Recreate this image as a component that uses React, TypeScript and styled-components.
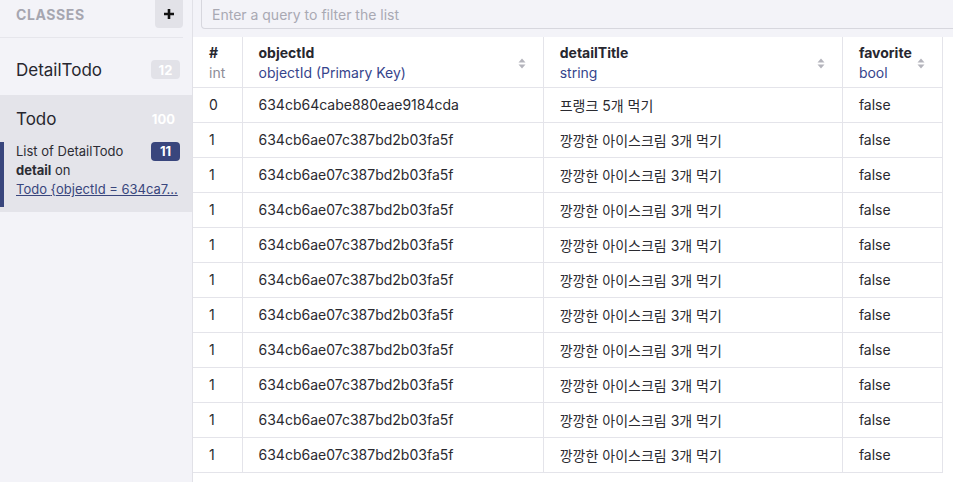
import React from "react";
import styled, { createGlobalStyle } from "styled-components";

const Global = createGlobalStyle`
  html, body { margin: 0; padding: 0; }
  body {
    font-family: Inter, "Noto Sans CJK KR", "Noto Sans", sans-serif;
    color: #27272f;
    background: #ffffff;
    overflow: hidden;
  }
  * { box-sizing: border-box; }
`;

const Root = styled.div`
  display: flex;
  width: 953px;
  height: 482px;
  overflow: hidden;
`;

const Sidebar = styled.aside`
  width: 193px;
  flex: none;
  background: #f3f3f8;
  border-right: 1px solid #e1e1e7;
  display: flex;
  flex-direction: column;
`;

const SideHeader = styled.div`
  height: 38px;
  margin-right: 9px;
  padding-left: 16px;
  display: flex;
  align-items: flex-start;
  justify-content: space-between;
  border-bottom: 1px solid #e6e6ec;
`;

const SideTitle = styled.span`
  margin-top: 6px;
  font-size: 14px;
  font-weight: 700;
  letter-spacing: 0.6px;
  color: #a6a6b0;
`;

const PlusButton = styled.button`
  width: 28px;
  height: 28px;
  border: none;
  border-radius: 0 0 4px 4px;
  background: #e2e2e8;
  display: flex;
  align-items: center;
  justify-content: center;
  padding: 0;
`;

const ClassItem = styled.div<{ $selected?: boolean }>`
  background: ${(p) => (p.$selected ? "#e4e4ea" : "transparent")};
  display: flex;
  flex-direction: column;
  padding-bottom: ${(p) => (p.$selected ? "5px" : "0")};
`;

const ClassRow = styled.div<{ $h: number; $top: number }>`
  height: ${(p) => p.$h}px;
  padding: ${(p) => p.$top}px 12px 0 16px;
  display: flex;
  align-items: center;
  justify-content: space-between;
`;

const ClassName = styled.span`
  font-size: 17px;
  color: #27272f;
`;

const Badge = styled.span<{ $bg: string }>`
  min-width: 29px;
  height: 19px;
  padding: 0 5px;
  border-radius: 4px;
  background: ${(p) => p.$bg};
  color: #ffffff;
  font-size: 13px;
  font-weight: 700;
  display: inline-flex;
  align-items: center;
  justify-content: center;
`;

const SubItem = styled.div`
  border-left: 4px solid #39467d;
  padding: 0 12px 8px 12px;
  display: flex;
  flex-direction: column;
  font-size: 13px;
  line-height: 19px;
  color: #2c2c34;
  white-space: nowrap;
`;

const SubTop = styled.div`
  display: flex;
  justify-content: space-between;
  align-items: center;
`;

const SubLink = styled.a`
  display: block;
  color: #39467d;
  text-decoration: underline;
  overflow: hidden;
  text-overflow: ellipsis;
`;

const Main = styled.main`
  flex: 1;
  display: flex;
  flex-direction: column;
  background: #f3f3f8;
  min-width: 0;
`;

const Toolbar = styled.div`
  height: 37px;
  padding-left: 8px;
  flex: none;
`;

const SearchInput = styled.input`
  width: 800px;
  height: 29px;
  border: 1px solid #d7d7de;
  border-top: none;
  border-radius: 0 0 0 4px;
  background: #f3f3f8;
  padding: 0 10px;
  font-family: Inter, sans-serif;
  font-size: 14px;
  color: #27272f;
  outline: none;
  &::placeholder { color: #a9a9b3; }
`;

const TableArea = styled.div`
  flex: 1;
  background: #ffffff;
`;

const Table = styled.table`
  border-collapse: collapse;
  table-layout: fixed;
  width: 750px;
  font-size: 14px;
`;

const HeadCell = styled.th<{ $w: number }>`
  width: ${(p) => p.$w}px;
  height: 50px;
  padding: 3px 17px 0 16px;
  border: 1px solid #e4e4ea;
  border-top: none;
  text-align: left;
  vertical-align: middle;
  &:first-child { border-left: none; }
`;

const HeadInner = styled.div`
  display: flex;
  align-items: center;
  justify-content: space-between;
`;

const HeadLabels = styled.div`
  display: flex;
  flex-direction: column;
  line-height: 20px;
`;

const HeadName = styled.span`
  font-weight: 700;
  color: #27272f;
`;

const HeadType = styled.span<{ $muted?: boolean }>`
  font-weight: 400;
  color: ${(p) => (p.$muted ? "#8d8d97" : "#36458c")};
`;

const Cell = styled.td`
  height: 35px;
  padding: 0 16px;
  border: 1px solid #e4e4ea;
  white-space: nowrap;
  overflow: hidden;
  color: #2a2a30;
  &:first-child { border-left: none; }
`;

const SortIcon = () => (
  <svg width="8" height="11" viewBox="0 0 8 11" style={{ flex: "none" }}>
    <path d="M4 0.5 L7.5 4.5 H0.5 Z" fill="#b4b4bc" />
    <path d="M4 10.5 L7.5 6.5 H0.5 Z" fill="#b4b4bc" />
  </svg>
);

const PlusIcon = () => (
  <svg width="12" height="12" viewBox="0 0 12 12">
    <path d="M6 1v10M1 6h10" stroke="#111" strokeWidth="2.6" />
  </svg>
);

type Row = { n: number; id: string; title: string; fav: string };

const rows: Row[] = [
  { n: 0, id: "634cb64cabe880eae9184cda", title: "프랭크 5개 먹기", fav: "false" },
  ...Array.from({ length: 10 }, () => ({
    n: 1,
    id: "634cb6ae07c387bd2b03fa5f",
    title: "깡깡한 아이스크림 3개 먹기",
    fav: "false",
  })),
];

const columns = [
  { w: 49, name: "#", type: "int", muted: true, sort: false },
  { w: 301, name: "objectId", type: "objectId (Primary Key)", muted: false, sort: true },
  { w: 299, name: "detailTitle", type: "string", muted: false, sort: true },
  { w: 100, name: "favorite", type: "bool", muted: false, sort: true },
];

export default function App() {
  return (
    <Root>
      <Global />
      <Sidebar>
        <SideHeader>
          <SideTitle>CLASSES</SideTitle>
          <PlusButton aria-label="add class">
            <PlusIcon />
          </PlusButton>
        </SideHeader>
        <ClassItem>
          <ClassRow $h={57} $top={6}>
            <ClassName>DetailTodo</ClassName>
            <Badge $bg="#e2e2e8">12</Badge>
          </ClassRow>
        </ClassItem>
        <ClassItem $selected>
          <ClassRow $h={47} $top={0}>
            <ClassName>Todo</ClassName>
            <Badge $bg="#e4e4ea">100</Badge>
          </ClassRow>
          <SubItem>
            <SubTop>
              <span>List of DetailTodo</span>
              <Badge $bg="#39467d">11</Badge>
            </SubTop>
            <span>
              <b>detail</b> on
            </span>
            <SubLink>Todo {"{"}objectId = 634ca7...</SubLink>
          </SubItem>
        </ClassItem>
      </Sidebar>
      <Main>
        <Toolbar>
          <SearchInput placeholder="Enter a query to filter the list" />
        </Toolbar>
        <TableArea>
          <Table>
            <thead>
              <tr>
                {columns.map((c) => (
                  <HeadCell key={c.name} $w={c.w}>
                    <HeadInner>
                      <HeadLabels>
                        <HeadName>{c.name}</HeadName>
                        <HeadType $muted={c.muted}>{c.type}</HeadType>
                      </HeadLabels>
                      {c.sort && <SortIcon />}
                    </HeadInner>
                  </HeadCell>
                ))}
              </tr>
            </thead>
            <tbody>
              {rows.map((r, i) => (
                <tr key={i}>
                  <Cell>{r.n}</Cell>
                  <Cell>{r.id}</Cell>
                  <Cell>{r.title}</Cell>
                  <Cell>{r.fav}</Cell>
                </tr>
              ))}
            </tbody>
          </Table>
        </TableArea>
      </Main>
    </Root>
  );
}
